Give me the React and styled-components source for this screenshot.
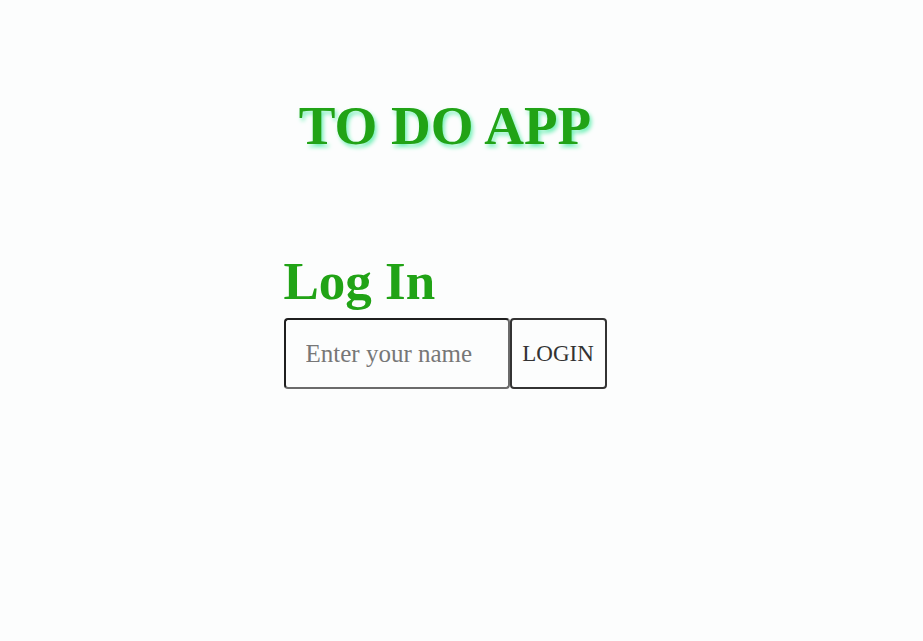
import styled, { createGlobalStyle } from "styled-components";

const GlobalStyle = createGlobalStyle`
  body {
    margin: 0;
    background-color: #fcfdfd;
    font-family: "Liberation Serif", "DejaVu Serif", serif;
  }
`;

const Page = styled.div`
  display: flex;
  justify-content: center;
  padding-right: 33px;
  min-height: 641px;
  box-sizing: border-box;
`;

const Column = styled.div`
  display: flex;
  flex-direction: column;
  width: 323px;
  padding-top: 95px;
`;

const AppTitle = styled.h1`
  margin: 0;
  text-align: center;
  font-size: 55px;
  font-weight: 700;
  line-height: 62px;
  color: #21a316;
  text-shadow: 2px 3px 4px #6ff0b6;
  white-space: nowrap;
`;

const Heading = styled.h2`
  margin: 97px 0 10px 0;
  font-size: 53px;
  font-weight: 700;
  line-height: 54px;
  color: #21a316;
`;

const Form = styled.form`
  display: flex;
`;

const NameInput = styled.input`
  width: 226px;
  height: 71px;
  box-sizing: border-box;
  padding: 0 0 0 20px;
  font-family: "Liberation Serif", serif;
  font-size: 25px;
  color: #333;
  background: #fcfdfd;
  border: 2px solid;
  border-color: #1f1f1f #6b6b6b #6b6b6b #1f1f1f;
  border-radius: 4px;
  outline: none;

  &::placeholder {
    color: #777;
  }
`;

const LoginButton = styled.button`
  width: 97px;
  height: 71px;
  box-sizing: border-box;
  padding: 0;
  font-family: "Liberation Serif", serif;
  font-size: 23px;
  color: #333;
  background: #fcfdfd;
  border: 2px solid #333;
  border-radius: 4px;
  cursor: pointer;
`;

const App = () => {
  return (
    <>
      <GlobalStyle />
      <Page>
        <Column>
          <AppTitle>TO DO APP</AppTitle>
          <Heading>Log In</Heading>
          <Form onSubmit={(e) => e.preventDefault()}>
            <NameInput type="text" placeholder="Enter your name" />
            <LoginButton type="submit">LOGIN</LoginButton>
          </Form>
        </Column>
      </Page>
    </>
  );
};

export default App;
